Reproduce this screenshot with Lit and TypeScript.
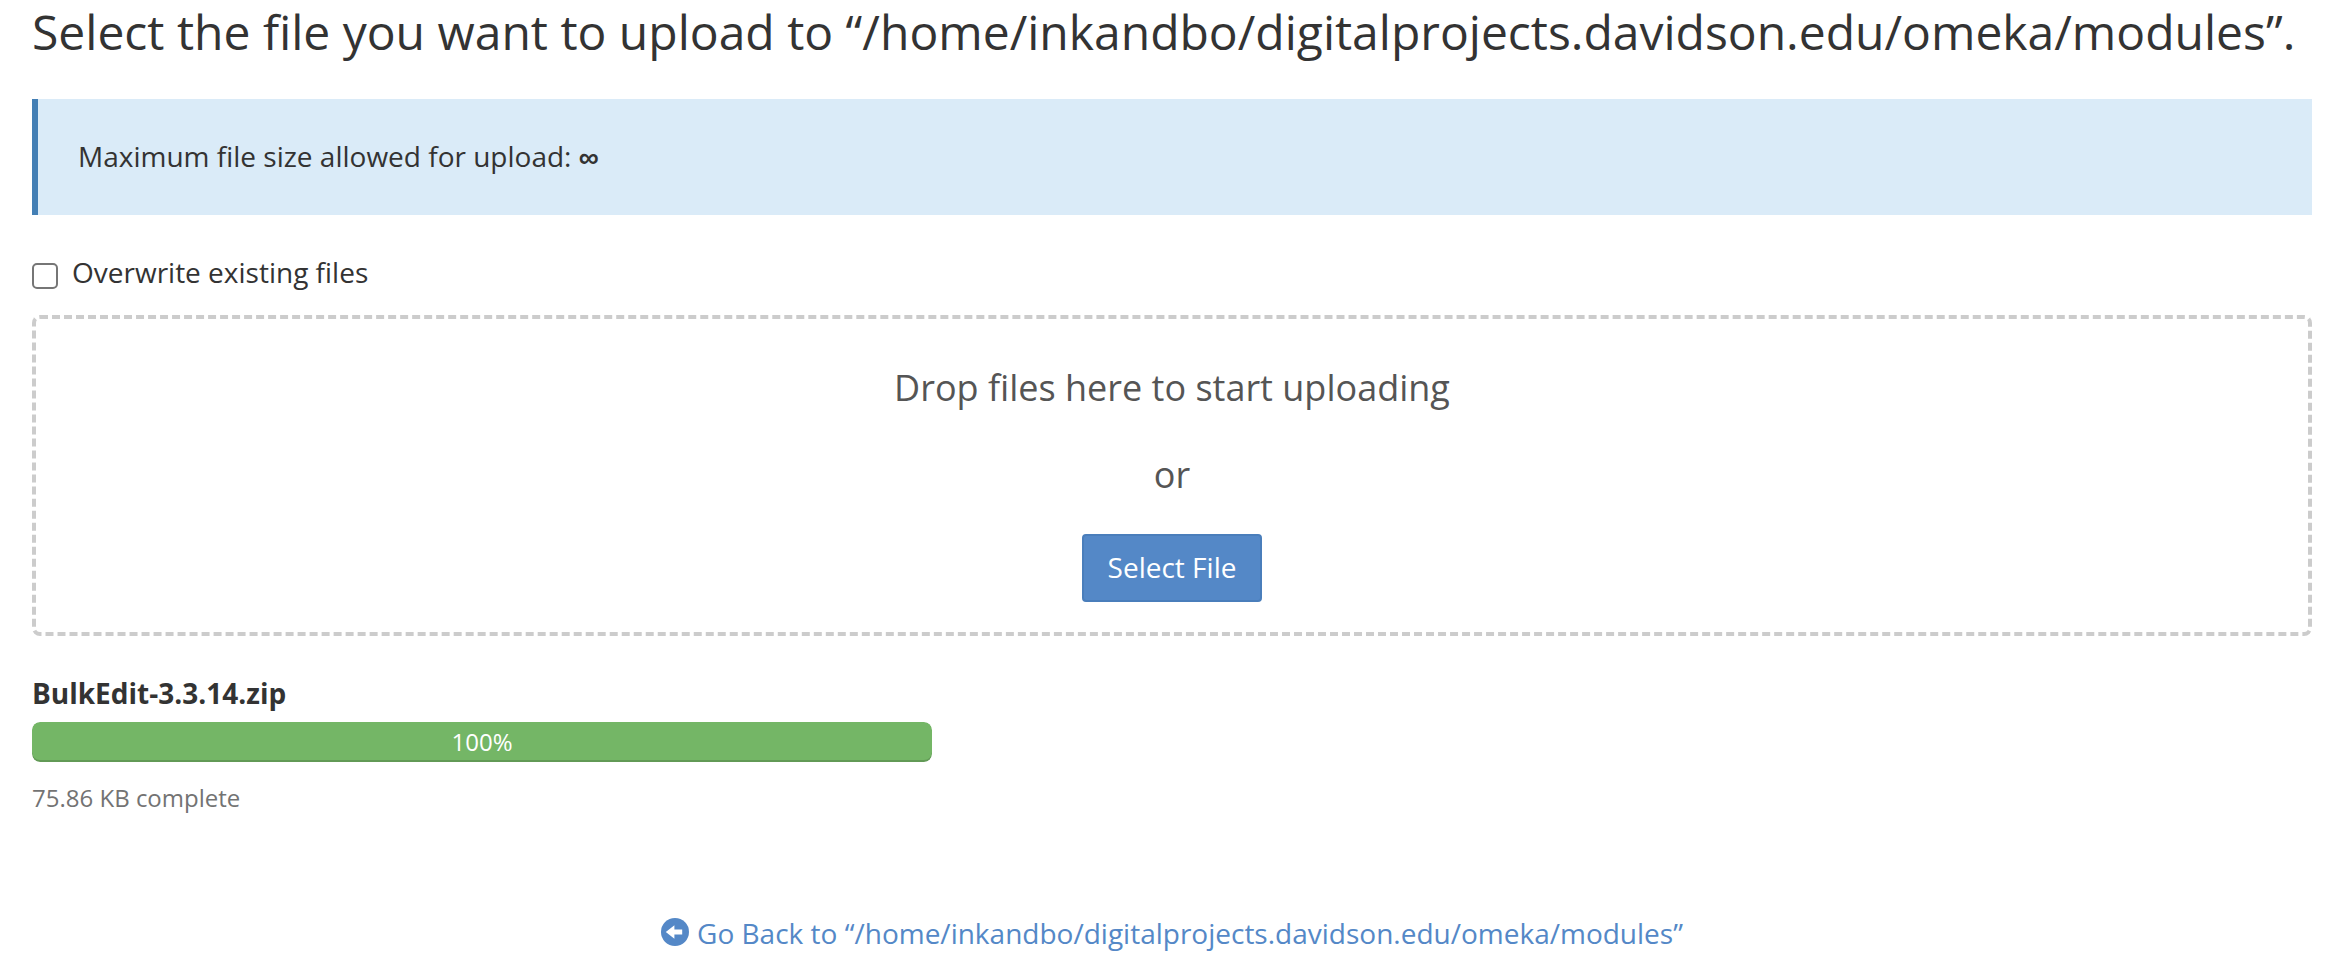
import { LitElement, html, css } from "lit";
import { customElement, property } from "lit/decorators.js";

@customElement("upload-progress")
class UploadProgress extends LitElement {
  @property() name = "";
  @property() size = "";
  @property({ type: Number }) percent = 0;

  static styles = css`
    :host { display: block; }
    .name { font-size: 28px; line-height: 40px; font-weight: 700; }
    .track { width: 900px; height: 40px; margin-top: 9px; border-radius: 8px; overflow: hidden; background: #f5f5f5; }
    .fill {
      height: 40px; background: #74b666; color: #fff; text-align: center;
      font-size: 24px; line-height: 39px; border-radius: 8px;
      box-shadow: inset 0 -2px 0 rgba(0, 0, 0, 0.15);
    }
    .status { margin-top: 16px; font-size: 24px; line-height: 39px; color: #737373; }
  `;

  render() {
    return html`
      <div class="name">${this.name}</div>
      <div class="track"><div class="fill" style="width:${this.percent}%">${this.percent}%</div></div>
      <div class="status">${this.size} complete</div>
    `;
  }
}

@customElement("app-root")
class AppRoot extends LitElement {
  @property() path = "/home/inkandbo/digitalprojects.davidson.edu/omeka/modules";

  static styles = css`
    :host {
      display: block; box-sizing: border-box; height: 978px; overflow: hidden;
      padding: 5px 18px 0 32px; background: #fff; color: #333;
      font-family: "Open Sans", sans-serif; font-size: 28px; line-height: 40px;
    }
    h1 { margin: 0; font-size: 48px; line-height: 53px; font-weight: 400; white-space: nowrap; }
    .alert {
      box-sizing: border-box; height: 116px; margin-top: 41px; padding: 37px 40px;
      border-left: 6px solid #437fb5; background: #daebf8;
    }
    .limit { font-family: "Liberation Sans", sans-serif; font-weight: 700; line-height: 1; }
    .overwrite { display: flex; align-items: flex-start; gap: 14px; margin-top: 37px; }
    .overwrite input {
      appearance: none; box-sizing: border-box; width: 26px; height: 26px; margin: 11px 0 0;
      border: 2px solid #767676; border-radius: 5px; background: #fff;
    }
    .drop {
      box-sizing: border-box; height: 321px; margin-top: 23px; padding-top: 43px;
      border: 4px dashed #ccc; border-radius: 8px;
      display: flex; flex-direction: column; align-items: center;
      font-size: 36px; line-height: 51px; color: #555;
    }
    .or { margin-top: 36px; }
    button {
      box-sizing: border-box; height: 68px; margin: 34px 0 0; padding: 0 24px 2px;
      border: 2px solid #4a7ebb; border-radius: 4px; background: #5488c7; color: #fff;
      font: 400 28px/40px "Open Sans", sans-serif;
    }
    upload-progress { margin-top: 37px; }
    .back { display: flex; justify-content: center; align-items: flex-start; gap: 8px; margin-top: 96px; color: #5488c7; text-decoration: none; }
    .back svg { width: 28px; height: 28px; margin-top: 5px; }
  `;

  render() {
    return html`
      <h1>Select the file you want to upload to “${this.path}”.</h1>
      <div class="alert">Maximum file size allowed for upload: <span class="limit">∞</span></div>
      <label class="overwrite"><input type="checkbox" /><span>Overwrite existing files</span></label>
      <div class="drop">
        <div>Drop files here to start uploading</div>
        <div class="or">or</div>
        <button>Select File</button>
      </div>
      <upload-progress name="BulkEdit-3.3.14.zip" size="75.86 KB" percent="100"></upload-progress>
      <a class="back">
        <svg viewBox="0 0 28 28">
          <circle cx="14" cy="14" r="14" fill="#5488c7" />
          <path d="M4.8 14L13.4 7.2V11.6H21.2V16.4H13.4V20.8Z" fill="#fff" />
        </svg>
        <span>Go Back to “${this.path}”</span>
      </a>
    `;
  }
}
